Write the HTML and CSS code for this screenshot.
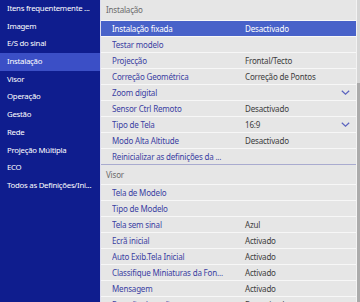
FILE: index.html
```html
<!DOCTYPE html>
<html lang="pt">
<head>
<meta charset="utf-8">
<link rel="stylesheet" href="styles.css">
</head>
<body>
<div class="screen">
  <nav class="sidebar">
    <div class="nav-item">Itens frequentemente ...</div>
    <div class="nav-item">Imagem</div>
    <div class="nav-item">E/S do sinal</div>
    <div class="nav-item active">Instalação</div>
    <div class="nav-item">Visor</div>
    <div class="nav-item">Operação</div>
    <div class="nav-item">Gestão</div>
    <div class="nav-item">Rede</div>
    <div class="nav-item">Projeção Múltipla</div>
    <div class="nav-item">ECO</div>
    <div class="nav-item">Todos as Definições/Ini...</div>
  </nav>
  <main class="panel">
    <div class="list">
      <div class="section-title">Instalação</div>
      <div class="row selected"><span class="name">Instalação fixada</span><span class="value">Desactivado</span></div>
      <div class="row"><span class="name">Testar modelo</span><span class="value"></span></div>
      <div class="row"><span class="name">Projecção</span><span class="value">Frontal/Tecto</span></div>
      <div class="row"><span class="name">Correção Geométrica</span><span class="value">Correção de Pontos</span></div>
      <div class="row"><span class="name">Zoom digital</span><span class="value"></span><svg class="chev" width="9" height="5" viewBox="0 0 9 5"><polyline points="0.8,0.8 4.5,4.2 8.2,0.8"/></svg></div>
      <div class="row"><span class="name">Sensor Ctrl Remoto</span><span class="value">Desactivado</span></div>
      <div class="row"><span class="name">Tipo de Tela</span><span class="value">16:9</span><svg class="chev" width="9" height="5" viewBox="0 0 9 5"><polyline points="0.8,0.8 4.5,4.2 8.2,0.8"/></svg></div>
      <div class="row"><span class="name">Modo Alta Altitude</span><span class="value">Desactivado</span></div>
      <div class="row"><span class="name">Reinicializar as definições da ...</span><span class="value"></span></div>
      <div class="section-title second">Visor</div>
      <div class="row"><span class="name">Tela de Modelo</span><span class="value"></span></div>
      <div class="row"><span class="name">Tipo de Modelo</span><span class="value"></span></div>
      <div class="row"><span class="name">Tela sem sinal</span><span class="value">Azul</span></div>
      <div class="row"><span class="name">Ecrã inicial</span><span class="value">Activado</span></div>
      <div class="row"><span class="name">Auto Exib.Tela Inicial</span><span class="value">Activado</span></div>
      <div class="row"><span class="name">Classifique Miniaturas da Fon...</span><span class="value">Activado</span></div>
      <div class="row"><span class="name">Mensagem</span><span class="value">Activado</span></div>
      <div class="row"><span class="name">Rotação do ecrã</span><span class="value">Desactivado</span></div>
    </div>
    <div class="scrollbar"><div class="thumb"></div></div>
  </main>
</div>
</body>
</html>
```

FILE: styles.css
```css
* { box-sizing: border-box; }
html, body {
  margin: 0;
  padding: 0;
  width: 360px;
  height: 302px;
  overflow: hidden;
  font-family: "Noto Sans", "Open Sans", sans-serif;
  font-size: 8px;
  letter-spacing: -0.18px;
}
.screen {
  display: flex;
  width: 360px;
  height: 302px;
}
.sidebar {
  width: 100px;
  flex: none;
  background: #0f1d8e;
  color: #ffffff;
}
.nav-item {
  height: 17.7px;
  line-height: 17.7px;
  padding-left: 7px;
  font-size: 7.8px;
  letter-spacing: -0.25px;
  white-space: nowrap;
}
.nav-item.active {
  background: #3b4fc6;
}
.panel {
  flex: 1;
  display: flex;
  background: #e6e6e6;
  border-left: 1px solid #dcdcf0;
  overflow: hidden;
}
.list {
  flex: 1;
  min-width: 0;
}
.section-title {
  height: 20px;
  line-height: 20px;
  padding-left: 5px;
  color: #6b6b6b;
}
.section-title.second {
  height: 20px;
  line-height: 19px;
  border-top: 1px solid #a9abcf;
}
.row {
  display: flex;
  align-items: center;
  height: 16px;
  border-top: 1px solid #f7f7f7;
  padding-left: 11px;
  color: #3a40a2;
  white-space: nowrap;
}
.row .name {
  width: 133px;
  overflow: hidden;
}
.row .value {
  flex: 1;
  color: #3d3d3d;
}
.row.selected {
  background: #4862c9;
  color: #ffffff;
}
.row.selected .value { color: #ffffff; }
.chev {
  margin-right: 6px;
  fill: none;
  stroke: #5a63bf;
  stroke-width: 1.2;
}
.scrollbar {
  width: 4px;
  flex: none;
  border-left: 1px solid #f3f3f3;
  background: #d6d6d6;
  padding-top: 83px;
}
.thumb {
  height: 219px;
  background: #ababab;
}
```
